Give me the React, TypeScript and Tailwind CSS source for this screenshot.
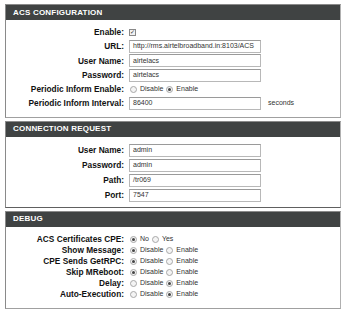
import React from 'react';

const font = { fontFamily: '"Liberation Sans", Arial, sans-serif' };

function Header({ title }: { title: string }) {
  return (
    <div className="h-[15px] bg-[#404343] flex items-center pl-[7px] text-white font-bold text-[8px] tracking-[0.2px]">
      {title}
    </div>
  );
}

function Label({ children }: { children: React.ReactNode }) {
  return (
    <div className="w-[118px] shrink-0 text-right font-bold text-[8.3px] text-[#111] whitespace-nowrap">{children}</div>
  );
}

function TextInput({ value }: { value: string }) {
  return (
    <div className="w-[132px] h-[13px] border border-[#b8b8b8] border-t-[#9a9a9a] bg-white px-[3px] flex items-center overflow-hidden whitespace-nowrap text-[7px] text-[#333]">
      {value}
    </div>
  );
}

function Radio({ checked }: { checked?: boolean }) {
  return (
    <span className="inline-flex w-[7px] h-[7px] rounded-full border border-[#a8a8a8] bg-[#f4f4f4] items-center justify-center">
      {checked && <span className="w-[3px] h-[3px] rounded-full bg-[#444]" />}
    </span>
  );
}

function RadioPair({ a, b, first }: { a: string; b: string; first: boolean }) {
  return (
    <div className="flex items-center gap-[3px] ml-[1px] text-[7px] text-[#333]">
      <Radio checked={first} />
      <span>{a}</span>
      <Radio checked={!first} />
      <span>{b}</span>
    </div>
  );
}

function Row({ label, h, children }: { label: string; h: string; children: React.ReactNode }) {
  return (
    <div className={`flex items-center gap-[5px] ${h}`}>
      <Label>{label}</Label>
      {children}
    </div>
  );
}

export default function App() {
  return (
    <div className="w-[349px] h-[310px] bg-white pl-[5px] pt-[4px]" style={font}>
      {/* ACS Configuration */}
      <div className="w-[336px] border border-[#8a8a8a] border-r-[#b0b0b0] border-b-[#a0a0a0]">
        <Header title="ACS CONFIGURATION" />
        <div className="pt-[5px] pb-[6px]">
          <Row label="Enable:" h="h-[14px]">
            <span className="w-[7px] h-[7px] border border-[#888] bg-[#f2f2f2] flex items-center justify-center text-[6px] leading-none text-[#333]">✓</span>
          </Row>
          <Row label="URL:" h="h-[14.5px]">
            <TextInput value="http://rms.airtelbroadband.in:8103/ACS" />
          </Row>
          <Row label="User Name:" h="h-[14.5px]">
            <TextInput value="airtelacs" />
          </Row>
          <Row label="Password:" h="h-[14.5px]">
            <TextInput value="airtelacs" />
          </Row>
          <Row label="Periodic Inform Enable:" h="h-[13px]">
            <RadioPair a="Disable" b="Enable" first={false} />
          </Row>
          <Row label="Periodic Inform Interval:" h="h-[15px]">
            <TextInput value="86400" />
            <span className="ml-[2px] text-[7px] text-[#333]">seconds</span>
          </Row>
        </div>
      </div>

      {/* Connection Request */}
      <div className="mt-[3px] w-[336px] border border-[#8a8a8a] border-r-[#b0b0b0] border-b-[#606060]">
        <Header title="CONNECTION REQUEST" />
        <div className="pt-[6px] pb-[4px]">
          <Row label="User Name:" h="h-[15px]">
            <TextInput value="admin" />
          </Row>
          <Row label="Password:" h="h-[15px]">
            <TextInput value="admin" />
          </Row>
          <Row label="Path:" h="h-[15px]">
            <TextInput value="/tr069" />
          </Row>
          <Row label="Port:" h="h-[15px]">
            <TextInput value="7547" />
          </Row>
        </div>
      </div>

      {/* Debug */}
      <div className="mt-[3px] w-[336px] border border-[#8a8a8a] border-r-[#b0b0b0] border-b-[#a0a0a0]">
        <Header title="DEBUG" />
        <div className="pt-[7px] pb-[8px]">
          <Row label="ACS Certificates CPE:" h="h-[11px]">
            <RadioPair a="No" b="Yes" first={true} />
          </Row>
          <Row label="Show Message:" h="h-[11px]">
            <RadioPair a="Disable" b="Enable" first={true} />
          </Row>
          <Row label="CPE Sends GetRPC:" h="h-[11px]">
            <RadioPair a="Disable" b="Enable" first={true} />
          </Row>
          <Row label="Skip MReboot:" h="h-[11px]">
            <RadioPair a="Disable" b="Enable" first={true} />
          </Row>
          <Row label="Delay:" h="h-[11px]">
            <RadioPair a="Disable" b="Enable" first={false} />
          </Row>
          <Row label="Auto-Execution:" h="h-[11px]">
            <RadioPair a="Disable" b="Enable" first={false} />
          </Row>
        </div>
      </div>
    </div>
  );
}
